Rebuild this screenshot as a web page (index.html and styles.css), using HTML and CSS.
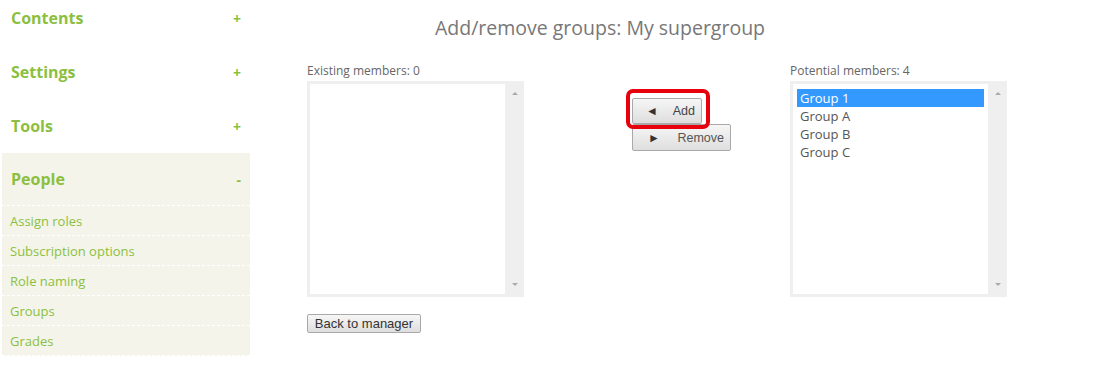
FILE: index.html
```html
<!DOCTYPE html>
<html lang="en">
<head>
    <meta charset="UTF-8">
    <meta name="viewport" content="width=device-width, initial-scale=1.0">
    <title>Add/remove groups</title>
    <link rel="stylesheet" href="styles.css">
</head>
<body>

    <!-- Sidebar -->
    <aside class="sidebar">
        <div class="block first">
            <div class="block-head"><span>Contents</span><span class="toggle">+</span></div>
        </div>
        <div class="block">
            <div class="block-head"><span>Settings</span><span class="toggle">+</span></div>
        </div>
        <div class="block">
            <div class="block-head"><span>Tools</span><span class="toggle">+</span></div>
        </div>
        <div class="block open">
            <div class="block-head"><span>People</span><span class="toggle">-</span></div>
            <ul class="block-list">
                <li><a href="#">Assign roles</a></li>
                <li><a href="#">Subscription options</a></li>
                <li><a href="#">Role naming</a></li>
                <li><a href="#">Groups</a></li>
                <li><a href="#">Grades</a></li>
            </ul>
        </div>
    </aside>

    <!-- Main content -->
    <main class="main">
        <h2 class="title">Add/remove groups: My supergroup</h2>

        <div class="columns">
            <div class="col">
                <label class="list-label">Existing members: 0</label>
                <div class="listbox">
                    <div class="listbox-inner"></div>
                    <div class="scrollbar"><span class="arr-up"></span><span class="arr-down"></span></div>
                </div>
                <button class="btn back">Back to manager</button>
            </div>

            <div class="col middle">
                <span class="highlight-wrap">
                    <button class="btn move add"><span class="arrow">&#9668;</span>Add</button>
                    <span class="highlight"></span>
                </span>
                <button class="btn move remove"><span class="arrow">&#9658;</span>Remove</button>
            </div>

            <div class="col">
                <label class="list-label">Potential members: 4</label>
                <div class="listbox">
                    <div class="listbox-inner">
                        <div class="option selected">Group 1</div>
                        <div class="option">Group A</div>
                        <div class="option">Group B</div>
                        <div class="option">Group C</div>
                    </div>
                    <div class="scrollbar"><span class="arr-up"></span><span class="arr-down"></span></div>
                </div>
            </div>
        </div>
    </main>

</body>
</html>
```

FILE: styles.css
```css
/* Page */
body {
    margin: 0;
    font-family: 'Open Sans', 'DejaVu Sans', sans-serif;
    background-color: white;
    display: flex;
    align-items: flex-start;
}

/* Sidebar */
.sidebar {
    width: 248px;
    flex-shrink: 0;
    margin-left: 2px;
    margin-top: -9px;
}

.block-head {
    display: flex;
    justify-content: space-between;
    align-items: center;
    height: 54px;
    padding: 0 9px 0 9px;
    color: #8cbf3f;
    font-size: 16px;
    font-weight: bold;
}

.block-head .toggle {
    font-size: 14px;
    font-weight: bold;
}

.block.open {
    background-color: #f4f4ea;
}

.block.open .block-head {
    height: 52px;
    border-bottom: 1px dashed white;
}

.block-list {
    list-style: none;
    margin: 0;
    padding: 0;
}

.block-list li {
    height: 29px;
    line-height: 29px;
    padding-left: 8px;
    border-bottom: 1px dashed white;
}

.block-list a {
    color: #8cbf3f;
    font-size: 13px;
    text-decoration: none;
}

/* Main */
.main {
    width: 700px;
    flex-shrink: 0;
}

.title {
    margin: 14px 0 0 0;
    text-align: center;
    font-size: 19.5px;
    line-height: 28px;
    font-weight: normal;
    color: #777;
}

.columns {
    display: flex;
    align-items: flex-start;
    margin-top: 21px;
    padding-left: 57px;
}

.col {
    width: 217px;
    flex-shrink: 0;
}

.middle {
    width: 158px;
    margin-left: 108px;
    padding-top: 35px;
}

.list-label {
    display: block;
    font-size: 12px;
    line-height: 16px;
    color: #666;
}

.listbox {
    display: flex;
    width: 217px;
    height: 216px;
    margin-top: 2px;
    padding: 3px 0 3px 3px;
    box-sizing: border-box;
    background-color: #efefef;
}

.listbox-inner {
    flex: 1;
    background-color: white;
    padding: 5px 4px;
}

.scrollbar {
    width: 19px;
    display: flex;
    flex-direction: column;
    justify-content: space-between;
    align-items: center;
    padding: 8px 0;
}

.arr-up, .arr-down {
    width: 0;
    height: 0;
    border-left: 3px solid transparent;
    border-right: 3px solid transparent;
}

.arr-up {
    border-bottom: 3px solid #aaa;
}

.arr-down {
    border-top: 3px solid #aaa;
}

.option {
    font-size: 13px;
    line-height: 18px;
    padding-left: 3px;
    color: #555;
}

.option.selected {
    background-color: #3399ff;
    color: white;
}

/* Buttons */
.btn {
    font-family: 'Liberation Sans', Arial, sans-serif;
    color: #333;
    background: linear-gradient(#f6f6f6, #dedede);
    border: 1px solid #a9a9a9;
    border-radius: 2px;
    cursor: pointer;
}

.move {
    display: flex;
    align-items: center;
    justify-content: space-between;
    font-size: 12.5px;
    color: #444;
    padding: 0 6px 0 13px;
}

.move .arrow {
    font-size: 12px;
    color: #333;
}

.add {
    width: 70px;
    height: 26px;
}

.remove {
    width: 99px;
    height: 27px;
    padding-left: 15px;
    color: #555;
}

.highlight-wrap {
    position: relative;
    display: block;
    width: 70px;
}

.highlight {
    position: absolute;
    top: -9px;
    left: -6px;
    right: -8px;
    bottom: -5px;
    border: 4px solid #e8000d;
    border-radius: 7px;
    pointer-events: none;
}

.back {
    margin-top: 17px;
    width: 114px;
    height: 19px;
    padding: 0;
    font-size: 13px;
}
```
